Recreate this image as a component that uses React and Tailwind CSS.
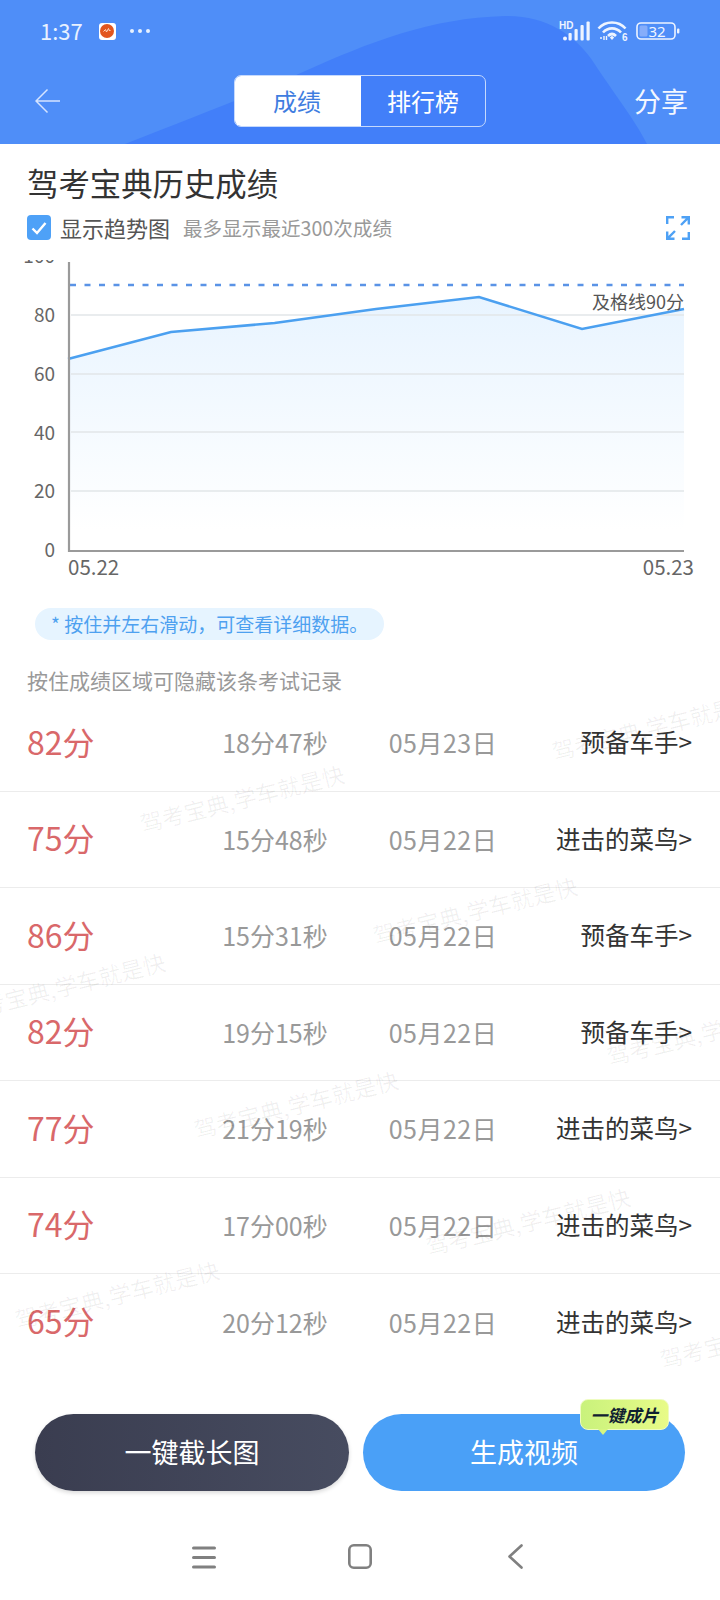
import React from "react";

const rows = [
  { score: "82分", time: "18分47秒", date: "05月23日", level: "预备车手>" },
  { score: "75分", time: "15分48秒", date: "05月22日", level: "进击的菜鸟>" },
  { score: "86分", time: "15分31秒", date: "05月22日", level: "预备车手>" },
  { score: "82分", time: "19分15秒", date: "05月22日", level: "预备车手>" },
  { score: "77分", time: "21分19秒", date: "05月22日", level: "进击的菜鸟>" },
  { score: "74分", time: "17分00秒", date: "05月22日", level: "进击的菜鸟>" },
  { score: "65分", time: "20分12秒", date: "05月22日", level: "进击的菜鸟>" },
];

// Centre points of the repeated diagonal watermark
const marks = [
  [654, 727], [242, 799], [475, 911], [63, 987], [296, 1105],
  [709, 1032], [528, 1222], [117, 1295], [762, 1335],
];

const points = [
  [68, 359], [171, 332], [274.6, 323], [376, 309], [479, 297], [582, 329], [684, 309],
];

function StatusBar() {
  return (
    <div className="relative flex h-[62px] items-center justify-between pl-[40px] pr-[40px]">
      <div className="flex items-center">
        <span className="pb-[3px] text-[22px] leading-none text-[#e8f1ff]">1:37</span>
        <div className="ml-[16px] flex h-[17px] w-[17px] items-center justify-center rounded-[3px] bg-white">
          <svg width="14" height="14" viewBox="0 0 14 14">
            <circle cx="7" cy="7" r="7" fill="#e2561f" />
            <path d="M3.5 7.5 5.5 5.5 6.5 8 8.5 4.5 9.5 7 10.5 6" fill="none" stroke="#ffd9c4" strokeWidth="1" />
          </svg>
        </div>
        <div className="ml-[14px] flex gap-[4px]">
          <span className="h-[4px] w-[4px] rounded-full bg-[#e8f1ff]" />
          <span className="h-[4px] w-[4px] rounded-full bg-[#e8f1ff]" />
          <span className="h-[4px] w-[4px] rounded-full bg-[#e8f1ff]" />
        </div>
      </div>
      <div className="flex items-center">
        <svg width="34" height="22" viewBox="0 0 34 22" fill="#eef4ff">
          <text x="0" y="8.5" fontSize="10" fontWeight="700" fontFamily="'Liberation Sans',sans-serif">HD</text>
          <circle cx="6" cy="18.5" r="2" />
          <rect x="9.5" y="13" width="3.2" height="7.5" rx="1" />
          <rect x="15.5" y="9" width="3.2" height="11.5" rx="1" />
          <rect x="21.5" y="5" width="3.2" height="15.5" rx="1" />
          <rect x="27.5" y="1.5" width="3.2" height="19" rx="1" />
        </svg>
        <svg className="ml-[4px]" width="32" height="22" viewBox="0 0 32 22" fill="none" stroke="#eef4ff" strokeWidth="2.6">
          <path d="M1.5 8.5C8.5 .5 21.5 .5 28.5 8.5" />
          <path d="M6 12.5C11 7 19 7 24 12.5" />
          <path d="M11 16C13.5 13.5 16.5 13.5 19 16" />
          <path d="M12.8 17.5 15 15.8 17.2 17.5 15 20Z" fill="#eef4ff" stroke="none" />
          <path d="M7 16v4M3 18h2M9.5 16v4" strokeWidth="1.4" />
          <text x="25" y="21" fontSize="10" fontWeight="700" fill="#eef4ff" stroke="none" fontFamily="'Liberation Sans',sans-serif">6</text>
        </svg>
        <svg className="ml-[7px]" width="44" height="20" viewBox="0 0 44 20">
          <rect x="1" y="2" width="38" height="16" rx="4" fill="none" stroke="#eef4ff" strokeWidth="1.6" />
          <rect x="3.5" y="4.5" width="8" height="11" rx="1.5" fill="#86adfa" />
          <rect x="41" y="7.5" width="2.4" height="5" rx="1" fill="#eef4ff" />
          <text x="21" y="15.5" fontSize="15" textAnchor="middle" fill="#f2f6ff" fontFamily="'Noto Sans',sans-serif">32</text>
        </svg>
      </div>
    </div>
  );
}

function TopBar() {
  return (
    <div className="relative flex h-[82px] items-start pl-[35px] pr-[32px] pt-[13px]">
      <svg className="mt-[13px]" width="26" height="26" viewBox="0 0 26 26" fill="none" stroke="#d5e4ff" strokeWidth="1.5">
        <path d="M25 13H1M12.5 1.5 1 13l11.5 11.5" />
      </svg>
      <div className="ml-[173px] flex h-[52px] w-[252px] overflow-hidden rounded-[7px] border border-[#c5d9fd]">
        <div className="flex w-[126px] items-center justify-center bg-white pr-[2px] text-[24px] text-[#3f7de0]">成绩</div>
        <div className="flex flex-1 items-center justify-center text-[24px] text-white">排行榜</div>
      </div>
      <span className="ml-auto mt-[6px] text-[27px] leading-[40px] text-[#f3f7ff]">分享</span>
    </div>
  );
}

function Chart() {
  const line = points.map(([x, y]) => `${x},${y}`).join(" ");
  const area = `68,550 ${line} 684,550`;
  return (
    <svg className="mt-[20px] block" width="720" height="320" viewBox="0 260 720 320">
      <defs>
        <linearGradient id="areaFill" x1="0" y1="0" x2="0" y2="1">
          <stop offset="0" stopColor="#e8f4ff" />
          <stop offset="0.92" stopColor="#ffffff" />
        </linearGradient>
      </defs>
      <polygon points={area} fill="url(#areaFill)" />
      {[315, 374, 432, 491].map((y) => (
        <line key={y} x1="71" x2="684" y1={y} y2={y} stroke="#e2e5e8" strokeOpacity="0.75" strokeWidth="2" />
      ))}
      <line x1="70" x2="684" y1="285" y2="285" stroke="#5a93e6" strokeWidth="2.4" strokeDasharray="6 8.5" />
      <polyline points={line} fill="none" stroke="#4ba0f0" strokeWidth="2.6" />
      <path d="M69 262V551H684" fill="none" stroke="#9a9a9a" strokeWidth="2.2" />
      {[["100", 263], ["80", 322], ["60", 381], ["40", 440], ["20", 498], ["0", 557]].map(([t, y]) => (
        <text key={t} x="55" y={y} fontSize="19" textAnchor="end" fill="#666666">{t}</text>
      ))}
      <text x="68" y="575" fontSize="20.5" fill="#666666">05.22</text>
      <text x="694" y="575" fontSize="20.5" textAnchor="end" fill="#666666">05.23</text>
      <text x="684" y="309" fontSize="18" textAnchor="end" fill="#555555">及格线90分</text>
    </svg>
  );
}

function Row({ score, time, date, level, last }) {
  return (
    <div className={`flex h-[96.5px] items-center pl-[27px] pr-[28px] ${last ? "" : "border-b border-[#ececec]"}`}>
      <span className="w-[170px] pb-[4px] text-[32px] text-[#d9686a]">{score}</span>
      <span className="w-[156px] text-center text-[25px] text-[#999999]">{time}</span>
      <span className="w-[180px] text-center text-[25px] tracking-[0.5px] text-[#999999]">{date}</span>
      <span className="flex-1 text-right text-[24.5px] text-[#333333]">{level}</span>
    </div>
  );
}

export default function App() {
  return (
    <div className="relative h-[1600px] w-[720px] overflow-hidden bg-white font-['Noto_Sans_CJK_SC','Noto_Sans',sans-serif]">
      <header className="relative h-[144px] overflow-hidden bg-[#4f8ef8]">
        <svg className="absolute left-0 top-0" width="720" height="144" viewBox="0 0 720 144">
          <path d="M125 144C190 118 250 96 303 72C370 42 430 18 505 16C545 15 575 35 592 60C615 95 635 120 647 144Z" fill="#427ff9" />
        </svg>
        <StatusBar />
        <TopBar />
      </header>

      <main>
        <h1 className="mt-[19px] pl-[27px] text-[31.4px] font-normal leading-[40px] text-[#333333]">驾考宝典历史成绩</h1>

        <div className="mt-[12px] flex h-[25px] items-center pl-[27px] pr-[30px]">
          <div className="flex h-[25px] w-[24px] items-center justify-center rounded-[4px] bg-[#4ea1f7]">
            <svg width="16" height="14" viewBox="0 0 16 14" fill="none" stroke="white" strokeWidth="2.4">
              <path d="M1.5 7.5 6 12 14.5 2" />
            </svg>
          </div>
          <span className="ml-[9px] text-[22px] text-[#555555]">显示趋势图</span>
          <span className="ml-[13px] text-[19.6px] text-[#999999]">最多显示最近300次成绩</span>
          <svg className="ml-auto" width="24" height="24" viewBox="0 0 24 24" fill="none" stroke="#4ea1f5" strokeWidth="2.4">
            <path d="M1.2 8V1.2H8M15.5 1.2h7.3V8.5M22.8 1.2 15 9M1.2 15.5v7.3H8.5M1.2 22.8 9 15M22.8 16v6.8H16" />
          </svg>
        </div>

        <Chart />

        <div className="ml-[35px] mt-[28px] flex h-[32px] w-[349px] items-center rounded-full bg-[#e6f4ff] pl-[16px] text-[19px] text-[#4ea1f0]">
          * 按住并左右滑动，可查看详细数据。
        </div>

        <p className="mt-[25px] h-[30px] pl-[27px] text-[21px] leading-[30px] text-[#999999]">按住成绩区域可隐藏该条考试记录</p>

        <div>
          {rows.map((r, i) => (
            <Row key={i} {...r} last={i === rows.length - 1} />
          ))}
        </div>

        <div className="mt-[43.5px] flex h-[77px] pl-[35px] pr-[35px]">
          <button className="w-[314px] rounded-full bg-gradient-to-r from-[#3a3d50] to-[#474c60] text-[27px] text-white shadow-[0_2px_4px_rgba(0,0,0,0.15)]">
            一键截长图
          </button>
          <div className="relative ml-[14px] w-[322px]">
            <button className="h-full w-full rounded-full bg-[#4aa0f7] text-[27px] text-white">生成视频</button>
            <div className="absolute left-[217px] top-[-15px] flex h-[31px] w-[89px] items-center justify-center rounded-[8px] border border-[#eefcc0] bg-gradient-to-r from-[#c9f27c] to-[#e8fb88] text-[17px] font-bold italic text-[#0f2030]">
              一键成片
              <span className="absolute left-[17px] top-[29px] h-0 w-0 border-x-[5px] border-t-[6px] border-x-transparent border-t-[#d6f680]" />
            </div>
          </div>
        </div>

        <nav className="mt-[53px] flex h-[25px] items-center pl-[192px]">
          <svg width="24" height="24" viewBox="0 0 24 24" stroke="#808080" strokeWidth="3" strokeLinecap="round">
            <path d="M1.5 3H22.5M1.5 12.5H22.5M1.5 22H22.5" />
          </svg>
          <svg className="ml-[132px]" width="24" height="25" viewBox="0 0 24 25" fill="none" stroke="#808080" strokeWidth="2.6">
            <rect x="1.3" y="1.3" width="21.4" height="22.4" rx="4.5" />
          </svg>
          <svg className="ml-[136px]" width="15" height="25" viewBox="0 0 15 25" fill="none" stroke="#808080" strokeWidth="2.6" strokeLinecap="round" strokeLinejoin="round">
            <path d="M13.5 1.5 1.5 12.5 13.5 23.5" />
          </svg>
        </nav>
      </main>

      {/* Repeating diagonal watermark laid over the page */}
      {marks.map(([x, y]) => (
        <span
          key={`${x}-${y}`}
          className="pointer-events-none absolute w-[240px] -translate-x-1/2 -translate-y-1/2 -rotate-[14deg] text-center text-[22.6px] leading-none whitespace-nowrap text-black/[0.06]"
          style={{ left: x, top: y }}
        >
          驾考宝典,学车就是快
        </span>
      ))}
    </div>
  );
}
